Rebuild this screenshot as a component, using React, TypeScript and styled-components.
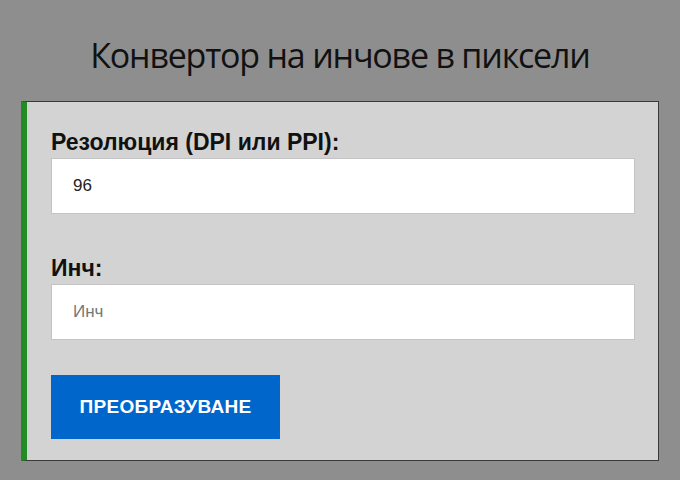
import styled, { createGlobalStyle } from 'styled-components'

const GlobalStyle = createGlobalStyle`
  html, body {
    margin: 0;
    padding: 0;
    background: #8e8e8e;
  }
  body {
    font-family: "Liberation Sans", Arial, sans-serif;
  }
`

const App = () => {
  return (
    <>
      <GlobalStyle />
      <Page>
        <Title>Конвертор на инчове в пиксели</Title>
        <Panel>
          <Label>Резолюция (DPI или PPI):</Label>
          <Input defaultValue="96" />
          <Label $spaced>Инч:</Label>
          <Input placeholder="Инч" />
          <Button>Преобразуване</Button>
        </Panel>
      </Page>
    </>
  )
}

const Page = styled.div`
  width: 680px;
  height: 480px;
  box-sizing: border-box;
  padding: 31px 21px 0 21px;
  display: flex;
  flex-direction: column;
`

const Title = styled.h1`
  margin: 0 0 22px;
  text-align: center;
  font-family: "Open Sans", "Noto Sans", sans-serif;
  font-weight: 400;
  font-size: 34px;
  line-height: 48px;
  letter-spacing: -1.2px;
  color: #111;
`

const Panel = styled.div`
  display: flex;
  flex-direction: column;
  align-items: flex-start;
  background: #d3d3d3;
  border: 1px solid #3a3a3a;
  border-left: 6px solid #238b23;
  padding: 28px 23px 21px 24px;
  box-sizing: border-box;
  width: 638px;
`

const Label = styled.label<{ $spaced?: boolean }>`
  font-size: 23px;
  font-weight: 700;
  line-height: 24px;
  color: #111;
  margin-top: ${p => (p.$spaced ? '42px' : '0')};
  margin-bottom: 4px;
`

const Input = styled.input`
  width: 100%;
  height: 56px;
  box-sizing: border-box;
  border: 1px solid #c4c4c4;
  background: #fff;
  padding: 0 21px;
  font-family: "Liberation Sans", Arial, sans-serif;
  font-size: 17px;
  color: #222;
  outline: none;

  &::placeholder {
    color: #777;
  }
`

const Button = styled.button`
  margin-top: 35px;
  width: 229px;
  height: 64px;
  border: none;
  background: #0066cc;
  color: #fff;
  font-family: "Liberation Sans", Arial, sans-serif;
  font-weight: 700;
  font-size: 19px;
  letter-spacing: 0.3px;
  text-transform: uppercase;
  cursor: pointer;
`

export default App
